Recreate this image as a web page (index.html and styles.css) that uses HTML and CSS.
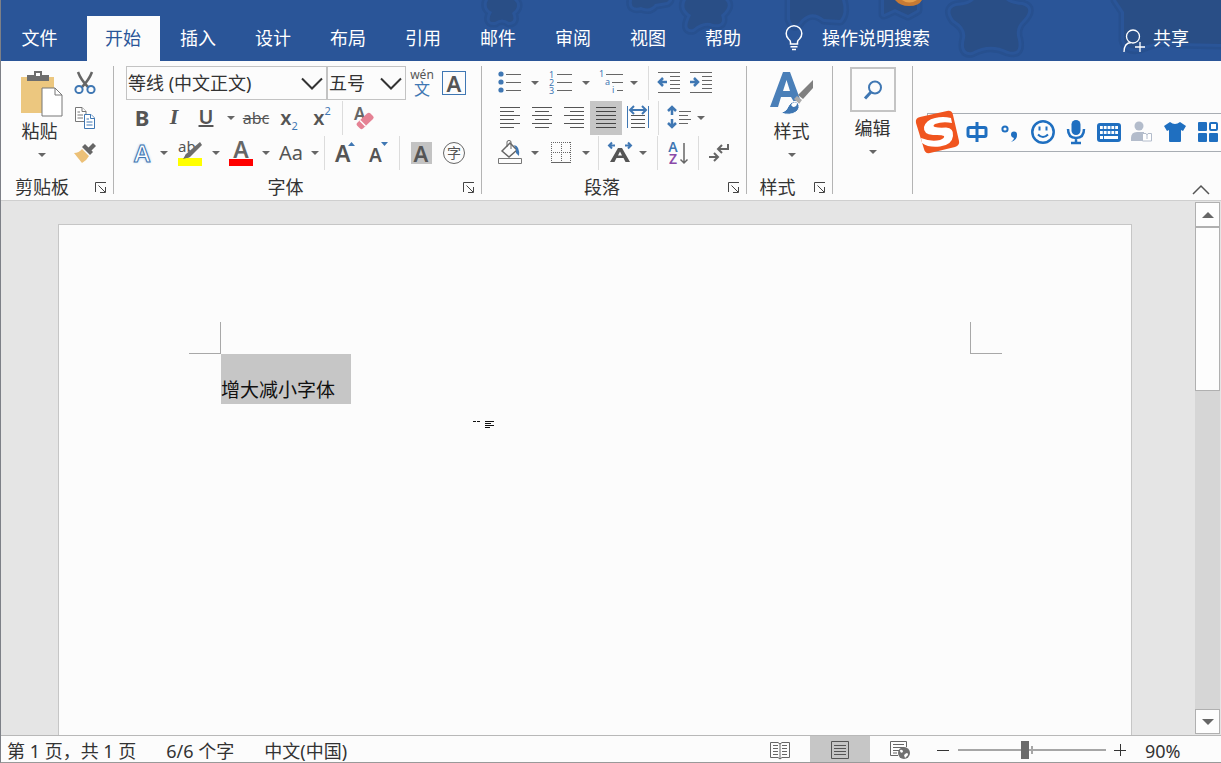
FILE: index.html
```html
<!DOCTYPE html>
<html lang="zh-CN">
<head>
<meta charset="utf-8">
<title>文字处理</title>
<link rel="stylesheet" href="styles.css">
</head>
<body>
<div class="window">
  <header class="header">
    <svg class="decor" width="1221" height="61" aria-hidden="true">
      <defs>
        <g id="stars" stroke-linejoin="round">
          <path d="M488 0Q484 8 492 12Q486 23 495 22Q502 17 509 22Q516 22 512 13Q521 6 514 0Z"/>
          <path d="M632 0Q630 10 641 7Q650 11 655 4L667 2L669 0Z"/>
          <path d="M686 0Q681 9 691 15Q683 31 693 29Q704 20 713 24Q725 26 721 15Q732 6 725 0Z"/>
          <path d="M790 0V19Q794 31 801 20Q812 9 824 19L840 20Q846 13 842 0Z"/>
          <path d="M884 0V14L895 9L908 15L917 10V0Z"/>
          <path d="M974 0Q970 5 956 6Q946 9 954 20Q967 28 965 38Q961 54 972 52Q990 42 1008 51Q1021 55 1018 40Q1014 28 1023 20Q1034 8 1022 5Q1010 4 1006 0Z"/>
          <path d="M1116 0L1124 12V40Q1127 51 1140 48Q1164 38 1178 43L1221 44V0Z"/>
        </g>
      </defs>
      <use href="#stars" fill="none" stroke="#27508f" stroke-width="11"/>
      <use href="#stars" fill="none" stroke="#2a5598" stroke-width="6"/>
      <use href="#stars" fill="#294e86"/>
      <path d="M895 0Q900 6 909 6Q919 6 922 0Z" fill="#c77a34"/>
      <path d="M902 0Q909 5 917 0Z" fill="#e7a04c"/>
    </svg>
    <nav class="tabs">
      <button class="tab tab-file">文件</button>
      <button class="tab tab-active">开始</button>
      <button class="tab">插入</button>
      <button class="tab">设计</button>
      <button class="tab">布局</button>
      <button class="tab">引用</button>
      <button class="tab">邮件</button>
      <button class="tab">审阅</button>
      <button class="tab">视图</button>
      <button class="tab">帮助</button>
    </nav>
    <label class="search">
      <svg width="20" height="26" viewBox="0 0 20 26" fill="none" stroke="#fff" stroke-width="1.500"><path d="M6.500 19V17Q6.500 15.500 4.500 14A7.800 7.800 0 1 1 15.500 14Q13.500 15.500 13.500 17V19Z"/><path d="M6.500 21.700H13.500M8 24.500H12"/></svg>
      <input class="search-input" type="text" placeholder="操作说明搜索" aria-label="操作说明搜索">
    </label>
    <button class="share">
      <svg width="22" height="24" viewBox="0 0 22 24" fill="none" stroke="#fff" stroke-width="1.300"><circle cx="10" cy="7.500" r="6.500"/><path d="M1 23Q1 14 8 13.500M17 13V23M12 18H22"/></svg>
      <span>共享</span>
    </button>
  </header>

  <section class="ribbon">
    <div class="group group-clipboard">
      <div class="clipboard-body">
        <button class="big">
          <svg width="42" height="46" viewBox="0 0 42 46"><path d="M0 6H33V42H0Z" fill="#ecc77f"/><path d="M6 4H13V0H21V4H28V10H6Z" fill="#6d6d6d"/><path d="M15 2H19V5H15Z" fill="#fff"/><path d="M21 17H34L41 24V45H21Z" fill="#fff" stroke="#777"/><path d="M34 17V24H41" fill="none" stroke="#777"/></svg>
          <span class="paste-label">粘贴</span><i class="arrow"></i>
        </button>
        <div class="stack">
          <button class="tool w32" aria-label="剪切"><svg width="22" height="24" viewBox="0 0 22 24" fill="none"><path d="M4 1Q7 9 14 16M18 1Q15 9 8 16" stroke="#666" stroke-width="2.500"/><circle cx="5" cy="18.500" r="3.600" stroke="#3f77b3" stroke-width="2"/><circle cx="17" cy="18.500" r="3.600" stroke="#3f77b3" stroke-width="2"/></svg></button>
          <button class="tool w32" aria-label="复制"><svg width="22" height="24" viewBox="0 0 22 24" fill="#fff"><path d="M1.500 1.500H8L12 5.500V15.500H1.500Z" stroke="#777"/><path d="M8 1.500V5.500H12M3.500 6H6M3.500 9H9M3.500 12H9" stroke="#777"/><path d="M10.500 8.500H17L20.500 12V22.500H10.500Z" stroke="#3f77b3"/><path d="M16.500 8.500V12.500H20.500M12.500 13H15M12.500 16H18.500M12.500 19H18.500" stroke="#3f77b3"/></svg></button>
          <button class="tool w32" aria-label="格式刷"><svg width="24" height="22" viewBox="0 0 24 22"><path d="M1 11Q6 11 9 7L16 14Q14 18 9 21Z" fill="#ecc077"/><path d="M9 5L12 2L20 10L17 13Z" fill="#666"/><path d="M15 6L20 1L23 4L18 9Z" fill="#666"/></svg></button>
        </div>
      </div>
      <div class="caption"><span>剪贴板</span><button class="launcher launcher-wide" aria-label="剪贴板选项"><svg width="12" height="12" viewBox="0 0 12 12" fill="none" stroke="#444"><path d="M.5 10V.5H11M3.500 3.500L10 10M10.500 5V10.500H5"/></svg></button></div>
    </div>
    <div class="rule"></div>

    <div class="group group-font">
      <div class="row">
        <label class="combo combo-font"><select aria-label="字体"><option>等线 (中文正文)</option></select><svg width="22" height="13" viewBox="0 0 22 13" fill="none" stroke="#333" stroke-width="2"><path d="M1 1.500L11 11.500L21 1.500"/></svg></label>
        <label class="combo combo-size"><select aria-label="字号"><option>五号</option></select><svg width="22" height="13" viewBox="0 0 22 13" fill="none" stroke="#333" stroke-width="2"><path d="M1 1.500L11 11.500L21 1.500"/></svg></label>
        <button class="tool w32 pinyin"><span>wén</span><span class="blue">文</span></button>
        <button class="tool w32"><span class="boxed">A</span></button>
      </div>
      <div class="row">
        <button class="tool w32 glyph bold">B</button>
        <button class="tool w32 glyph italic">I</button>
        <button class="tool w32 glyph underline">U</button>
        <button class="tool w18" aria-label="下划线样式"><i class="arrow"></i></button>
        <button class="tool w32 strike">abc</button>
        <button class="tool w34 script">x<sub>2</sub></button>
        <button class="tool w32 script">x<sup>2</sup></button>
        <i class="line"></i>
        <button class="tool w34" aria-label="清除格式"><svg width="22" height="26" viewBox="0 0 22 26"><text x="1" y="15" class="svg-letter" font-size="17" fill="#666">A</text><path d="M4 18L14 8.500Q16 7 17.500 8.500L20 11Q21.500 12.500 20 14L10 23.500Q8 25 6.500 23L4 20.500Q3 19 4 18Z" fill="#e58294"/><path d="M7 15.500L12.500 21" stroke="#fff" stroke-width="1.500"/></svg></button>
      </div>
      <div class="row">
        <button class="tool w32 effect">A</button>
        <button class="tool w12" aria-label="文本效果选项"><i class="arrow"></i></button>
        <button class="tool w40" aria-label="突出显示"><svg width="26" height="26" viewBox="0 0 26 26"><text x="1" y="12" font-size="15" class="svg-text" fill="#555">ab</text><path d="M23 2L25 5L13 17L7 19L9 14Z" fill="#6d6d6d"/><path d="M1 18H25V26H1Z" fill="#ff0"/><path d="M6 19L9 14L13 17Z" fill="#6d6d6d"/></svg></button>
        <button class="tool w12" aria-label="突出显示颜色"><i class="arrow"></i></button>
        <button class="tool w38" aria-label="字体颜色"><svg width="24" height="26" viewBox="0 0 24 26"><text x="12" y="18" text-anchor="middle" font-size="23" class="svg-letter" fill="#666">A</text><path d="M0 19H24V26H0Z" fill="red"/></svg></button>
        <button class="tool w12" aria-label="字体颜色选项"><i class="arrow"></i></button>
        <button class="tool w38 case">Aa</button>
        <button class="tool w10" aria-label="更改大小写"><i class="arrow"></i></button>
        <i class="line"></i>
        <button class="tool w34" aria-label="增大字体"><svg width="22" height="26" viewBox="0 0 22 26"><text x="0" y="22" font-size="23" class="svg-letter" fill="#555">A</text><path d="M13 6L16.500 2L20 6Z" fill="#3f77b3"/></svg></button>
        <button class="tool w32" aria-label="减小字体"><svg width="22" height="26" viewBox="0 0 22 26"><text x="1" y="22" font-size="19" class="svg-letter" fill="#555">A</text><path d="M13 2L20 2L16.500 6Z" fill="#3f77b3"/></svg></button>
        <i class="line"></i>
        <button class="tool w34"><span class="shaded">A</span></button>
        <button class="tool w32"><span class="ring">字</span></button>
      </div>
      <div class="caption"><span>字体</span><button class="launcher" aria-label="字体选项"><svg width="12" height="12" viewBox="0 0 12 12" fill="none" stroke="#444"><path d="M.5 10V.5H11M3.500 3.500L10 10M10.500 5V10.500H5"/></svg></button></div>
    </div>
    <div class="rule"></div>

    <div class="group group-paragraph">
      <div class="row">
        <button class="tool w32" aria-label="项目符号"><svg width="24" height="24" viewBox="0 0 24 24"><g fill="#3f77b3"><circle cx="3" cy="3" r="2.600"/><circle cx="3" cy="11" r="2.600"/><circle cx="3" cy="19" r="2.600"/></g><path d="M8 3.500H23M8 11.500H23M8 19.500H23" stroke="#666"/></svg></button>
        <button class="tool w18" aria-label="项目符号库"><i class="arrow"></i></button>
        <button class="tool w34 numbers" aria-label="编号"><span class="digits"><b>1</b><b>2</b><b>3</b></span><svg width="16" height="24" viewBox="0 0 16 24"><path d="M0 3.500H15M0 11.500H15M0 19.500H15" stroke="#666"/></svg></button>
        <button class="tool w16" aria-label="编号库"><i class="arrow"></i></button>
        <button class="tool w34" aria-label="多级列表"><svg width="24" height="24" viewBox="0 0 24 24"><g class="svg-text" font-size="9" fill="#3f77b3"><text x="0" y="6">1</text><text x="6" y="14">a</text><text x="13" y="22">i</text></g><path d="M7 3.500H24M13 11.500H24M18 19.500H24" stroke="#666"/></svg></button>
        <button class="tool w12" aria-label="多级列表库"><i class="arrow"></i></button>
        <i class="line line-loose"></i>
        <button class="tool w32" aria-label="减少缩进量"><svg width="24" height="24" viewBox="0 0 24 24"><path d="M1 1.500H23M13 5.500H23M13 9.500H23M13 13.500H23M13 17.500H23M1 21.500H23" stroke="#666"/><path d="M10 11H2M6 7L2 11L6 15" fill="none" stroke="#3f77b3" stroke-width="2.500"/></svg></button>
        <button class="tool w32" aria-label="增加缩进量"><svg width="24" height="24" viewBox="0 0 24 24"><path d="M1 1.500H23M13 5.500H23M13 9.500H23M13 13.500H23M13 17.500H23M1 21.500H23" stroke="#666"/><path d="M1 11H9M5 7L9 11L5 15" fill="none" stroke="#3f77b3" stroke-width="2.500"/></svg></button>
      </div>
      <div class="row">
        <button class="tool w32" aria-label="左对齐"><svg width="22" height="24" viewBox="0 0 22 24" stroke="#555"><path d="M1 1.500H21M1 5.500H15M1 9.500H21M1 13.500H15M1 17.500H21M1 21.500H15"/></svg></button>
        <button class="tool w32" aria-label="居中"><svg width="22" height="24" viewBox="0 0 22 24" stroke="#555"><path d="M1 1.500H21M4 5.500H18M1 9.500H21M4 13.500H18M1 17.500H21M4 21.500H18"/></svg></button>
        <button class="tool w32" aria-label="右对齐"><svg width="22" height="24" viewBox="0 0 22 24" stroke="#555"><path d="M1 1.500H21M7 5.500H21M1 9.500H21M7 13.500H21M1 17.500H21M7 21.500H21"/></svg></button>
        <button class="tool w32 pressed" aria-label="两端对齐"><svg width="22" height="24" viewBox="0 0 22 24" stroke="#444"><path d="M1 1.500H21M1 5.500H21M1 9.500H21M1 13.500H21M1 17.500H21M1 21.500H21"/></svg></button>
        <button class="tool w32" aria-label="分散对齐"><svg width="22" height="26" viewBox="0 0 22 26" fill="none"><path d="M.5 1V23M21.500 1V23" stroke="#3f77b3"/><path d="M4 10.500H18M4 14.500H18M4 18.500H18M4 22.500H18" stroke="#555"/><path d="M4 5H18M7 1L3 5L7 9M15 1L19 5L15 9" stroke="#3f77b3" stroke-width="2"/></svg></button>
        <i class="line"></i>
        <button class="tool w32" aria-label="行距"><svg width="24" height="26" viewBox="0 0 24 26" fill="none"><path d="M5 2V10M1 6L5 2L9 6M5 14V22M1 18L5 22L9 18" stroke="#3f77b3" stroke-width="2.500"/><path d="M12 6.500H24M12 10.500H21M12 14.500H24M12 18.500H21" stroke="#666"/></svg></button>
        <button class="tool w12" aria-label="行距选项"><i class="arrow"></i></button>
      </div>
      <div class="row">
        <button class="tool w32" aria-label="底纹"><svg width="26" height="26" viewBox="0 0 26 26" fill="none"><path d="M5 11L13 3L20 10L12 17Z" stroke="#666" stroke-width="1.500"/><path d="M10 7V2Q10 .5 12 .5Q14 .5 14 2V9" stroke="#666"/><path d="M17 5Q23 6 22 16L19 13V9Z" fill="#3f77b3"/><path d="M1.500 18.500H24.500V23.500H1.500Z" stroke="#777"/></svg></button>
        <button class="tool w18" aria-label="底纹颜色"><i class="arrow"></i></button>
        <button class="tool w34" aria-label="边框"><svg width="22" height="24" viewBox="0 0 22 24" fill="none" stroke="#666"><path d="M1 1.500H21M1 11.500H21M1.500 1V20M11.500 1V20M20.500 1V20" stroke-dasharray="1 1"/><path d="M1 21.500H21"/></svg></button>
        <button class="tool w16" aria-label="边框选项"><i class="arrow"></i></button>
        <i class="line"></i>
        <button class="tool w34" aria-label="中文版式"><svg width="26" height="22" viewBox="0 0 26 22"><path d="M3 20L11 6H15L23 20H18.500L16.500 16H9.500L7.500 20ZM11 13.500H15L13 9.500Z" fill="#555" fill-rule="evenodd"/><path d="M8 3.500H2M5 .5L2 3.500L5 6.500M18 3.500H24M21 .5L24 3.500L21 6.500" fill="none" stroke="#3f77b3" stroke-width="2"/></svg></button>
        <button class="tool w12" aria-label="中文版式选项"><i class="arrow"></i></button>
        <i class="line line-loose"></i>
        <button class="tool w32 sort" aria-label="排序"><span class="digits letters"><b>A</b><b class="violet">Z</b></span><svg width="8" height="24" viewBox="0 0 8 24"><path d="M4 2V22M.5 18.500L4 22L7.500 18.500" fill="none" stroke="#666" stroke-width="1.500"/></svg></button>
        <i class="line"></i>
        <button class="tool w32" aria-label="显示编辑标记"><svg width="22" height="22" viewBox="0 0 22 22" fill="none" stroke="#666" stroke-width="2"><path d="M20 2V7H10M14 3L10 7L14 11M1 15H10M6 11L10 15L6 19"/></svg></button>
      </div>
      <div class="caption"><span>段落</span><button class="launcher" aria-label="段落选项"><svg width="12" height="12" viewBox="0 0 12 12" fill="none" stroke="#444"><path d="M.5 10V.5H11M3.500 3.500L10 10M10.500 5V10.500H5"/></svg></button></div>
    </div>
    <div class="rule"></div>

    <div class="group group-styles">
      <button class="big big-styles">
        <svg width="46" height="46" viewBox="0 0 46 46"><path d="M1 36L14 1H21L31 28L25 31L22 26H12L9 36ZM14 20H21L17.500 9Z" fill="#4a7fb8" fill-rule="evenodd"/><path d="M44 9V17L34 28L29 24Z" fill="#808080"/><path d="M28 25L33 29L30 33L25 28Z" fill="#aaa"/><path d="M12 42Q18 40 20 34Q25 28 29 32Q32 37 27 41Q21 45 12 42Z" fill="#3f77b3" stroke="#fff"/><path d="M22 34Q24 30 28 32Q28 36 24 36Z" fill="#fff"/></svg>
        <span>样式</span><i class="arrow"></i>
      </button>
      <div class="caption"><span>样式</span><button class="launcher" aria-label="样式选项"><svg width="12" height="12" viewBox="0 0 12 12" fill="none" stroke="#444"><path d="M.5 10V.5H11M3.500 3.500L10 10M10.500 5V10.500H5"/></svg></button></div>
    </div>
    <div class="rule"></div>

    <div class="group group-edit">
      <button class="big big-framed">
        <span class="frame"><svg width="20" height="20" viewBox="0 0 20 20" fill="none" stroke="#3f77b3"><circle cx="12" cy="7.500" r="6" stroke-width="2"/><path d="M8 12L2 18.500" stroke-width="3"/></svg></span>
        <span>编辑</span><i class="arrow"></i>
      </button>
    </div>
    <div class="rule"></div>
    <button class="collapse" aria-label="折叠功能区"><svg width="18" height="10" viewBox="0 0 18 10" fill="none" stroke="#555" stroke-width="1.500"><path d="M1 9L9 1L17 9"/></svg></button>

    <div class="ime">
      <svg class="ime-logo" width="46" height="44" viewBox="0 0 46 44"><path d="M5 7L32 1Q37 0 38 5L44 31Q45 35 40 37L15 43Q10 44 9 39L1 13Q0 8 5 7Z" fill="#f0551f"/><path d="M36 8L37 13Q28 11 20 14Q17 16 20 17Q24 18 31 17.500Q39 18 38 26Q37 35 25 36.500Q14 38 7 33L6 28Q16 32 25 30Q30 28 29 26Q27 24.500 18 25Q8 24 9 17Q11 10 20 8Q28 6 36 8Z" fill="#fff"/></svg>
      <div class="ime-tools">
        <button aria-label="中文"><svg width="22" height="22" viewBox="0 0 22 22" fill="none" stroke="#1f6fc0" stroke-width="3"><rect x="2" y="6.500" width="18" height="9" rx="1.500"/><path d="M11 1V21"/></svg></button>
        <button aria-label="中文标点"><svg width="22" height="22" viewBox="0 0 22 22"><circle cx="6" cy="8" r="2.600" fill="none" stroke="#1f6fc0" stroke-width="2"/><path d="M12 21Q15 19 15 17Q12 16 12 13.500A3 3 0 0 1 18 13.500Q18.500 19 12 21Z" fill="#1f6fc0"/></svg></button>
        <button aria-label="表情"><svg width="24" height="24" viewBox="0 0 24 24" fill="none" stroke="#1f6fc0" stroke-width="2"><circle cx="12" cy="12" r="10.700" stroke-width="2.500"/><path d="M8.500 6.500V10.500M15.500 6.500V10.500M7 14.500Q12 19.500 17 14.500"/></svg></button>
        <button aria-label="语音"><svg width="20" height="24" viewBox="0 0 20 24"><rect x="5.500" y="0" width="9" height="15" rx="4.500" fill="#1f6fc0"/><path d="M2 9Q2 18 10 18T18 9M10 18V23M5 23H15" fill="none" stroke="#1f6fc0" stroke-width="2.500"/></svg></button>
        <button aria-label="软键盘"><svg width="24" height="19" viewBox="0 0 24 19"><rect width="24" height="19" rx="3" fill="#1f6fc0"/><path d="M3 4.500H21M3 9.500H21" stroke="#fff" stroke-width="3" stroke-dasharray="2.800 1"/><path d="M3 14.500H6M7 14.500H21" stroke="#fff" stroke-width="3"/></svg></button>
        <button aria-label="账号"><svg width="24" height="22" viewBox="0 0 24 22" fill="#b3bccb"><circle cx="9" cy="5" r="4.500"/><path d="M1 20V17Q1 11 7 11H14V20Z"/><path d="M12.500 12.500H16L17 14L18 12.500H21.500V20H12.500Z" fill="#fff" stroke="#b3bccb"/><path d="M17 14V18" stroke="#b3bccb"/></svg></button>
        <button aria-label="皮肤"><svg width="22" height="22" viewBox="0 0 22 22"><path d="M6 1Q11 5 16 1L22 5L19 10L17 9V20Q17 21 16 21H6Q5 21 5 20V9L3 10L0 5Z" fill="#1f6fc0"/></svg></button>
        <button aria-label="工具箱"><svg width="20" height="20" viewBox="0 0 20 20" fill="#1f6fc0"><rect width="9" height="9" rx="1"/><rect y="11" width="9" height="9" rx="1"/><rect x="11" y="11" width="9" height="9" rx="1"/><rect x="12" y="1" width="7" height="7" rx="1" fill="#fff" stroke="#1f6fc0" stroke-width="2"/></svg></button>
      </div>
    </div>
  </section>

  <main class="workspace">
    <div class="canvas">
      <article class="page">
        <div class="margins"><i class="corner corner-left"></i><i class="corner corner-right"></i></div>
        <p class="selection">增大减小字体</p>
        <svg class="pointer" width="22" height="12" viewBox="0 0 22 12" stroke="#111"><path d="M0 1.500H3M4 1.500H7M12 1.500H21M12 3.500H18M12 5.500H21M12 7.500H17"/></svg>
      </article>
    </div>
    <div class="scrollbar">
      <button class="scroll-button" aria-label="向上滚动"><svg width="12" height="6" viewBox="0 0 12 6"><path d="M0 6L6 0L12 6Z" fill="#666"/></svg></button>
      <div class="scroll-track"><div class="scroll-thumb"></div></div>
      <button class="scroll-button" aria-label="向下滚动"><svg width="12" height="6" viewBox="0 0 12 6"><path d="M0 0L6 6L12 0Z" fill="#666"/></svg></button>
    </div>
  </main>

  <footer class="status">
    <div class="status-info"><span>第 1 页，共 1 页</span><span>6/6 个字</span><span>中文(中国)</span></div>
    <div class="status-view">
      <button class="view" aria-label="阅读视图"><svg width="20" height="20" viewBox="0 0 20 20" fill="none" stroke="#666"><path d="M.5 2.500H8L10 4L12 2.500H19.500V17.500H12L10 19L8 17.500H.5ZM10 3V19M3 5.500H8M3 8.500H8M3 11.500H8M3 14.500H8M12 5.500H17M12 8.500H17M12 11.500H17M12 14.500H17"/></svg></button>
      <button class="view view-active" aria-label="页面视图"><svg width="20" height="20" viewBox="0 0 20 20" fill="none" stroke="#555"><path d="M1.500 1.500H18.500V18.500H1.500ZM4 5.500H16M4 8.500H16M4 11.500H16M4 14.500H16"/></svg></button>
      <button class="view" aria-label="Web 版式视图"><svg width="22" height="20" viewBox="0 0 22 20" fill="none"><path d="M9 15.500H1.500V1.500H17.500V7M4 4.500H15M4 7.500H15M4 10.500H10M4 13H8" stroke="#666"/><circle cx="15" cy="13" r="6" fill="#707070"/><path d="M11 10Q14 9 14 12Q11 14 11 10M15 15Q19 11 19 15L16 18Z" fill="#fff"/></svg></button>
      <button class="zoom-step" aria-label="缩小"><svg width="12" height="12" viewBox="0 0 12 12" stroke="#333"><path d="M0 6.500H12"/></svg></button>
      <input class="zoom" type="range" min="0" max="100" value="45" aria-label="缩放">
      <button class="zoom-step" aria-label="放大"><svg width="12" height="12" viewBox="0 0 12 12" stroke="#333"><path d="M0 6.500H12M6.500 0V12"/></svg></button>
      <button class="percent">90%</button>
    </div>
  </footer>
</div>
</body>
</html>
```

FILE: styles.css
```css
* { box-sizing: border-box; }

body {
  margin: 0;
  font-family: "Noto Sans", "Noto Sans CJK SC", sans-serif;
  font-size: 18px;
  line-height: 24px;
  color: #333;
}

button, input, select {
  margin: 0;
  padding: 0;
  border: 0;
  background: none;
  font: inherit;
  color: inherit;
  border-radius: 0;
}

svg { display: block; flex: none; overflow: visible; }

.window {
  display: flex;
  flex-direction: column;
  height: 100vh;
  border-left: 1px solid #7d8087;
  border-bottom: 1px solid #999;
  background: #fcfcfc;
  overflow: hidden;
}

/* Title area and tabs */
.header {
  position: relative;
  display: flex;
  flex: none;
  align-items: stretch;
  padding-top: 16px;
  height: 61px;
  background: #2a5598;
  color: #fff;
  overflow: hidden;
}
.decor { position: absolute; top: 0; left: -1px; }
.tabs { position: relative; display: flex; gap: 2px; }
.tab { width: 73px; padding: 0 1px 2px 0; white-space: nowrap; }
.tab-file { width: 84px; padding-right: 7px; }
.tab-active { background: #fcfcfc; color: #2a5598; }
.search {
  position: relative;
  display: flex;
  flex: 1;
  align-items: center;
  gap: 18px;
  margin-left: 24px;
  padding-bottom: 2px;
}
.search-input { width: 160px; outline: 0; }
.search-input::placeholder { color: #fff; opacity: 1; }
.share {
  position: relative;
  display: flex;
  align-items: center;
  gap: 8px;
  padding-right: 32px;
}
.share span { padding-bottom: 2px; }
.share svg { align-self: flex-end; margin-bottom: 8px; }

/* Ribbon */
.ribbon {
  position: relative;
  display: flex;
  flex: none;
  height: 140px;
  padding-top: 5px;
  border-bottom: 1px solid #cfcfcf;
}
.rule { flex: none; width: 1px; margin-bottom: 6px; background: #b4b4b4; }
.group { display: flex; flex: none; flex-direction: column; gap: 1px; }
.group-clipboard { width: 112px; }
.group-font { width: 367px; }
.group-paragraph { width: 264px; }
.group-styles { width: 85px; }
.group-edit { width: 79px; }

.row { display: flex; height: 34px; padding-left: 12px; }
.clipboard-body { display: flex; height: 104px; padding-left: 15px; }
.stack { display: flex; flex-direction: column; gap: 1px; margin-left: 1px; }
.stack .tool { flex: 1; }

.caption { display: flex; flex: 1; align-items: center; padding-top: 2px; }
.caption span { flex: 1; text-align: center; }
.launcher { display: flex; flex: none; justify-content: center; width: 24px; padding-top: 2px; }
.launcher-wide { width: 30px; padding-left: 6px; }

.tool {
  display: flex;
  flex: none;
  align-items: center;
  justify-content: center;
  color: #555;
}
.w10 { width: 10px; }
.w12 { width: 12px; }
.w16 { width: 16px; }
.w18 { width: 18px; }
.w32 { width: 32px; }
.w34 { width: 34px; }
.w38 { width: 38px; }
.w40 { width: 40px; }
.pressed { background: #c6c6c6; }

.line { flex: none; width: 1px; margin: 0 4px; background: #dcdcdc; }
.line-loose { margin-left: 8px; }

.arrow {
  flex: none;
  border: 4px solid transparent;
  border-top-color: #666;
  border-bottom: 0;
}

.big {
  display: flex;
  flex: none;
  flex-direction: column;
  align-items: center;
  height: 104px;
  padding-top: 5px;
}
.big span { line-height: 28px; }
.big .arrow { margin-top: 8px; }
.clipboard-body .big { width: 52px; }
.big .paste-label { padding-right: 5px; }
.big-styles { padding-left: 4px; }
.big .frame {
  display: flex;
  align-items: center;
  justify-content: center;
  width: 46px;
  height: 45px;
  margin-bottom: 2px;
  border: 2px solid #c4c4c4;
}
.big-framed { padding-top: 1px; }

.combo {
  display: flex;
  flex: none;
  align-items: center;
  border: 1px solid #c3c3c3;
}
.combo select { flex: 1; min-width: 0; appearance: none; outline: 0; padding-left: 1px; }
.combo svg { margin-right: 3px; pointer-events: none; }
.combo-font { width: 201px; }
.combo-size { width: 79px; }

.pinyin { flex-direction: column; font-size: 12px; line-height: 13px; }
.pinyin .blue { font-size: 16px; line-height: 17px; color: #3f77b3; }
.boxed, .shaded {
  width: 24px;
  height: 24px;
  font-size: 22px;
  font-weight: 600;
  line-height: 22px;
  text-align: center;
}
.boxed { border: 1px solid #3f77b3; }
.shaded { width: 21px; height: 22px; background: #c3c3c3; }
.ring {
  width: 22px;
  height: 22px;
  border: 1px solid #666;
  border-radius: 50%;
  font-size: 14px;
  line-height: 19px;
  text-align: center;
}

.glyph { font-size: 22px; padding-bottom: 2px; }
.bold { font-weight: 700; }
.italic { font-family: "Liberation Serif", serif; font-weight: 700; font-style: italic; }
.underline { font-weight: 600; font-size: 20px; text-decoration: underline; text-decoration-thickness: 2px; }
.strike { text-decoration: line-through; font-size: 16px; }
.script { font-size: 20px; font-weight: 600; }
.script sub, .script sup { font-size: 11px; font-weight: 400; color: #3f77b3; line-height: 14px; }
.script sub { align-self: flex-end; margin-bottom: 2px; }
.script sup { align-self: flex-start; margin-top: 3px; }
.effect {
  font-size: 24px;
  font-weight: 600;
  color: #fff;
  -webkit-text-stroke: 1px #3f77b3;
  text-shadow: 0 0 3px #7fb2e5;
}
.case { font-size: 20px; }
.svg-letter { font-family: "Noto Sans", sans-serif; font-weight: 600; }
.svg-text { font-family: "Noto Sans", sans-serif; }

.numbers { gap: 3px; }
.digits {
  display: flex;
  flex-direction: column;
  color: #3f77b3;
  font-size: 9px;
  line-height: 8px;
}
.digits b { font-weight: 400; }
.sort { gap: 2px; }
.letters { font-size: 14px; line-height: 12px; text-align: center; }
.letters b { font-weight: 600; }
.letters .violet { color: #8a4aa8; }

.collapse { align-self: flex-end; margin: 0 11px 5px auto; }

/* Floating input method bar */
.ime {
  position: absolute;
  top: 49px;
  right: 0;
  display: flex;
  width: 306px;
  height: 44px;
  align-items: center;
}
.ime-logo { position: relative; z-index: 1; }
.ime-tools {
  display: flex;
  flex: 1;
  align-items: center;
  height: 39px;
  margin-left: -34px;
  padding-left: 32px;
  border: 1px solid #a8adb3;
  border-right: 0;
  background: #fcfcfc;
}
.ime-tools button { display: flex; justify-content: center; flex: 0 0 33px; }

/* Document */
.workspace { display: flex; flex: 1; min-height: 0; background: #e5e5e5; }
.canvas { display: flex; flex: 1; padding: 23px 63px 0 57px; }
.page {
  position: relative;
  flex: 1;
  padding: 97px 129px 0 130px;
  border: 1px solid #c6c6c6;
  border-bottom: 0;
  background: #fcfcfc;
}
.margins { display: flex; justify-content: space-between; }
.corner { width: 32px; height: 32px; border-bottom: 1px solid #a8a8a8; }
.corner-left { border-right: 1px solid #a8a8a8; }
.corner-right { border-left: 1px solid #a8a8a8; }
.selection {
  width: 130px;
  margin: 0 0 0 32px;
  padding-top: 22px;
  background: #c6c6c6;
  color: #111;
  font-size: 19px;
  line-height: 28px;
}
.pointer { position: absolute; top: 195px; left: 414px; }

.scrollbar {
  display: flex;
  flex: none;
  flex-direction: column;
  width: 26px;
  padding: 1px 1px 1px 0;
}
.scroll-button {
  display: flex;
  flex: none;
  align-items: center;
  justify-content: center;
  height: 25px;
  border: 1px solid #b0b0b0;
  background: #fdfdfd;
}
.scroll-track { flex: 1; background: #d6d6d6; }
.scroll-thumb { height: 34%; border: 1px solid #b0b0b0; background: #fdfdfd; }

/* Status bar */
.status {
  display: flex;
  flex: none;
  justify-content: space-between;
  height: 27px;
  border-top: 1px solid #b8b8b8;
}
.status-info { display: flex; align-items: center; gap: 30px; padding: 3px 0 0 6px; }
.status-info span { white-space: nowrap; }
.status-view { display: flex; align-items: stretch; }
.view { display: flex; align-items: center; justify-content: center; width: 60px; padding-top: 1px; }
.view-active { background: #c6c6c6; }
.zoom-step { display: flex; align-items: center; justify-content: center; width: 14px; padding-top: 2px; }
.view + .zoom-step { margin-left: 6px; }
.zoom {
  align-self: center;
  width: 148px;
  height: 18px;
  margin: 2px 7px 0 8px;
  appearance: none;
  background:
    linear-gradient(#a6a6a6, #a6a6a6) 73px 50% / 2px 8px no-repeat,
    linear-gradient(#a6a6a6, #a6a6a6) 0 50% / 100% 2px no-repeat;
}
.zoom::-webkit-slider-thumb { appearance: none; width: 8px; height: 18px; background: #6b6b6b; }
.percent { width: 94px; padding: 3px 0 0 18px; text-align: left; }
```
